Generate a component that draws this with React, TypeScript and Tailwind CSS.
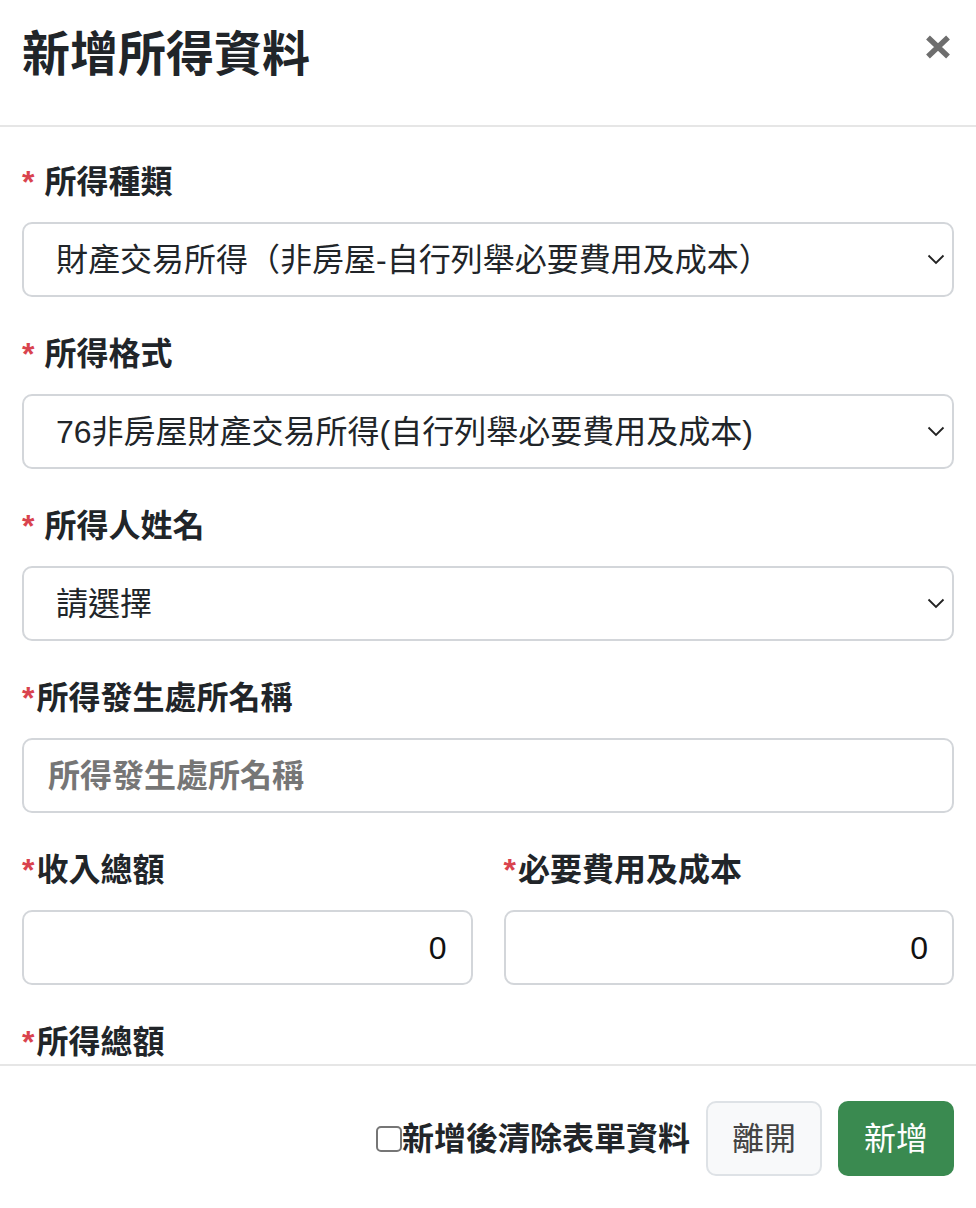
import { ReactNode } from 'react';

type LabelProps = {
  text: string;
  spaced?: boolean;
};

function FieldLabel({ text, spaced }: LabelProps) {
  return (
    <div className="flex leading-[48px] text-[32px] font-bold text-[#212529] mb-[16px] whitespace-nowrap">
      <span className="text-[#d9434e]">*</span>
      <span className={spaced ? 'w-[10px]' : 'w-[2px]'} />
      <span>{text}</span>
    </div>
  );
}

function Chevron() {
  return (
    <svg width="18" height="11" viewBox="0 0 18 11" fill="none">
      <path d="M1.5 1.5 L9 9 L16.5 1.5" stroke="#222" strokeWidth="1.8" />
    </svg>
  );
}

function SelectBox({ value }: { value: string }) {
  return (
    <div className="h-[75px] border-2 border-[#d3d6da] rounded-[10px] flex items-center justify-between pl-[32px] pr-[7px] bg-white">
      <span className="text-[32px] text-[#212529] whitespace-nowrap">{value}</span>
      <Chevron />
    </div>
  );
}

function Field({ children, className = '' }: { children: ReactNode; className?: string }) {
  return <div className={`mb-[33px] ${className}`}>{children}</div>;
}

export default function App() {
  return (
    <div className="w-[976px] h-[1208px] bg-white flex flex-col font-['Liberation_Sans','Noto_Sans_CJK_TC',sans-serif]">
      <div className="h-[127px] shrink-0 border-b-2 border-[#e6e6e6] flex items-start justify-between pl-[22px] pr-[25px]">
        <h1 className="pt-[26px] leading-[58px] text-[48px] font-bold text-[#212529]">新增所得資料</h1>
        <svg className="mt-[35px]" width="26" height="24" viewBox="0 0 26 24" fill="none">
          <path d="M3 2.5 L23 21.5 M23 2.5 L3 21.5" stroke="#6e6e6e" strokeWidth="5.5" />
        </svg>
      </div>

      <div className="flex-1 min-h-0 overflow-hidden px-[22px] pt-[31px]">
        <Field>
          <FieldLabel text="所得種類" spaced />
          <SelectBox value="財產交易所得（非房屋-自行列舉必要費用及成本）" />
        </Field>
        <Field>
          <FieldLabel text="所得格式" spaced />
          <SelectBox value="76非房屋財產交易所得(自行列舉必要費用及成本)" />
        </Field>
        <Field>
          <FieldLabel text="所得人姓名" spaced />
          <SelectBox value="請選擇" />
        </Field>
        <Field>
          <FieldLabel text="所得發生處所名稱" />
          <div className="h-[75px] border-2 border-[#d3d6da] rounded-[10px] flex items-center px-[24px]">
            <span className="text-[32px] font-semibold text-[#767676] whitespace-nowrap">所得發生處所名稱</span>
          </div>
        </Field>
        <div className="grid grid-cols-2 gap-x-[31px]">
          <Field>
            <FieldLabel text="收入總額" />
            <div className="h-[75px] border-2 border-[#d3d6da] rounded-[10px] flex items-center justify-end px-[24px]">
              <span className="text-[32px] text-[#111]">0</span>
            </div>
          </Field>
          <Field>
            <FieldLabel text="必要費用及成本" />
            <div className="h-[75px] border-2 border-[#d3d6da] rounded-[10px] flex items-center justify-end px-[24px]">
              <span className="text-[32px] text-[#111]">0</span>
            </div>
          </Field>
        </div>
        <Field>
          <FieldLabel text="所得總額" />
          <div className="h-[75px] border-2 border-[#d3d6da] rounded-[10px]" />
        </Field>
      </div>

      <div className="h-[144px] shrink-0 border-t-2 border-[#e6e6e6] flex items-center justify-end pr-[22px] pt-[3px]">
        <label className="flex items-center">
          <span className="w-[26px] h-[26px] border-2 border-[#767676] rounded-[5px] bg-white" />
          <span className="text-[32px] font-bold text-[#212529] leading-[48px]">新增後清除表單資料</span>
        </label>
        <button className="ml-[16px] w-[116px] h-[75px] bg-[#f8f9fa] border-2 border-[#dee2e6] rounded-[10px] text-[32px] text-[#444]">
          離開
        </button>
        <button className="ml-[16px] w-[116px] h-[75px] bg-[#3a8a50] rounded-[10px] text-[32px] text-white">
          新增
        </button>
      </div>
    </div>
  );
}
